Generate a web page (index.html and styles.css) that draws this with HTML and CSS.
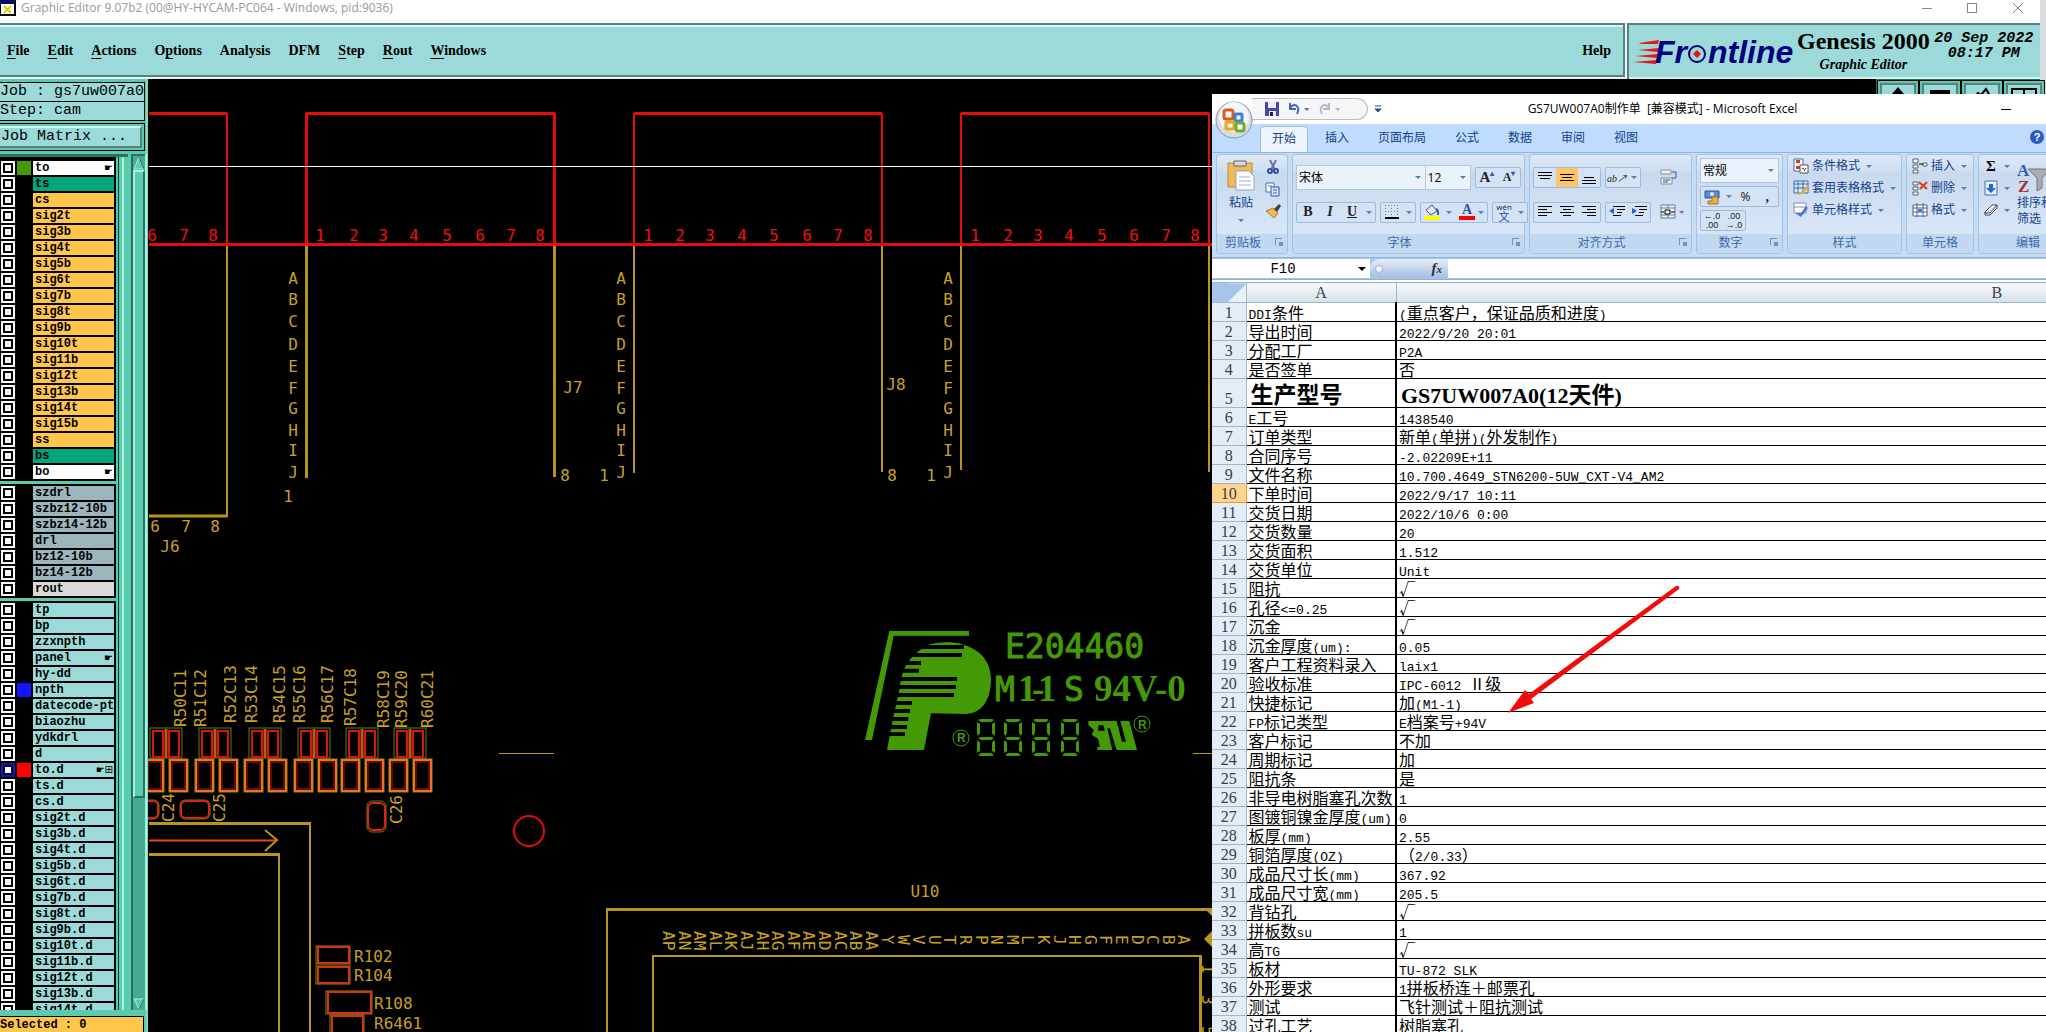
FILE: index.html
```html
<!DOCTYPE html>
<html lang="zh-CN">
<head>
<meta charset="utf-8">
<title>Graphic Editor 9.07b2</title>
<link rel="stylesheet" href="styles.css">
</head>
<body>
<main class="editor">
  <header class="titlebar">
    <svg class="app-icon" width="16" height="16" viewBox="0 0 16 16"><rect width="15" height="15" x="0" y="0" fill="#fff" stroke="#000" stroke-width="2"/><rect width="15" height="4" fill="#0b1060"/><path d="M4 6l7 7M11 6l-7 7" stroke="#d8d000" stroke-width="2"/></svg>
    <h1>Graphic Editor 9.07b2 (00@HY-HYCAM-PC064 - Windows, pid:9036)</h1>
    <svg class="win-buttons" width="104" height="14" viewBox="0 0 104 14" fill="none" stroke="#888"><path d="M0 7.500h10M91 2l10 10M101 2l-10 10"/><rect x="45.500" y="2.500" width="9" height="9"/></svg>
  </header>
  <div class="topbar">
    <nav class="menu">
      <a href="#"><u>F</u>ile</a><a href="#"><u>E</u>dit</a><a href="#"><u>A</u>ctions</a><a href="#">O<u>p</u>tions</a><a href="#">Analysis</a><a href="#">DFM</a><a href="#"><u>S</u>tep</a><a href="#"><u>R</u>out</a><a href="#"><u>W</u>indows</a><a href="#" class="help">Help</a>
    </nav>
    <div class="brand">
      <svg class="logo" width="164" height="40" viewBox="0 0 164 40"><g fill="#e81818"><path d="M6 8l20-3-1 4H8zM5 15l21-2-1 4zM2 21l23-2-1 4zM0 27l24-2-1 4z"/></g><g fill="#00007e" font-family="Liberation Sans, sans-serif" font-weight="bold" font-style="italic" font-size="32"><text x="22" y="28">Fr</text><text x="75" y="28">ntline</text></g><circle cx="64" cy="19" r="8" fill="#9bdad9" stroke="#00007e" stroke-width="2"/><path d="M64 15l4 4-4 4-4-4z" fill="#e81010"/></svg>
      <div class="product"><strong>Genesis 2000</strong><em>Graphic Editor</em></div>
      <div class="clock">20 Sep 2022<br>08:17 PM</div>
    </div>
  </div>
  <div class="workspace">
    <aside class="sidebar">
      <div class="info"><div>Job : gs7uw007a0</div><div>Step: cam</div></div>
      <div class="matrix-wrap"><button class="matrix">Job Matrix ...</button></div>
      <div class="layers-area">
        <div class="layers">
          <div class="group signal">
            <label class="white"><input type="checkbox"><i class="green"></i><span>to</span><b>☛</b></label>
            <label class="mask"><input type="checkbox"><i></i><span>ts</span></label>
            <label><input type="checkbox"><i></i><span>cs</span></label>
            <label><input type="checkbox"><i></i><span>sig2t</span></label>
            <label><input type="checkbox"><i></i><span>sig3b</span></label>
            <label><input type="checkbox"><i></i><span>sig4t</span></label>
            <label><input type="checkbox"><i></i><span>sig5b</span></label>
            <label><input type="checkbox"><i></i><span>sig6t</span></label>
            <label><input type="checkbox"><i></i><span>sig7b</span></label>
            <label><input type="checkbox"><i></i><span>sig8t</span></label>
            <label><input type="checkbox"><i></i><span>sig9b</span></label>
            <label><input type="checkbox"><i></i><span>sig10t</span></label>
            <label><input type="checkbox"><i></i><span>sig11b</span></label>
            <label><input type="checkbox"><i></i><span>sig12t</span></label>
            <label><input type="checkbox"><i></i><span>sig13b</span></label>
            <label><input type="checkbox"><i></i><span>sig14t</span></label>
            <label><input type="checkbox"><i></i><span>sig15b</span></label>
            <label><input type="checkbox"><i></i><span>ss</span></label>
            <label class="mask"><input type="checkbox"><i></i><span>bs</span></label>
            <label class="white"><input type="checkbox"><i></i><span>bo</span><b>☛</b></label>
          </div>
          <div class="group drill">
            <label><input type="checkbox"><i></i><span>szdrl</span></label>
            <label><input type="checkbox"><i></i><span>szbz12-10b</span></label>
            <label><input type="checkbox"><i></i><span>szbz14-12b</span></label>
            <label><input type="checkbox"><i></i><span>drl</span></label>
            <label><input type="checkbox"><i></i><span>bz12-10b</span></label>
            <label><input type="checkbox"><i></i><span>bz14-12b</span></label>
            <label class="rout"><input type="checkbox"><i></i><span>rout</span></label>
          </div>
          <div class="group misc">
            <label><input type="checkbox"><i></i><span>tp</span></label>
            <label><input type="checkbox"><i></i><span>bp</span></label>
            <label><input type="checkbox"><i></i><span>zzxnpth</span></label>
            <label><input type="checkbox"><i></i><span>panel</span><b>☛</b></label>
            <label><input type="checkbox"><i></i><span>hy-dd</span></label>
            <label><input type="checkbox"><i class="blue"></i><span>npth</span></label>
            <label><input type="checkbox"><i></i><span>datecode-pto</span></label>
            <label><input type="checkbox"><i></i><span>biaozhu</span></label>
            <label><input type="checkbox"><i></i><span>ydkdrl</span></label>
            <label><input type="checkbox"><i></i><span>d</span></label>
            <label><input type="checkbox" checked><i class="red"></i><span>to.d</span><b>☛⊞</b></label>
            <label><input type="checkbox"><i></i><span>ts.d</span></label>
            <label><input type="checkbox"><i></i><span>cs.d</span></label>
            <label><input type="checkbox"><i></i><span>sig2t.d</span></label>
            <label><input type="checkbox"><i></i><span>sig3b.d</span></label>
            <label><input type="checkbox"><i></i><span>sig4t.d</span></label>
            <label><input type="checkbox"><i></i><span>sig5b.d</span></label>
            <label><input type="checkbox"><i></i><span>sig6t.d</span></label>
            <label><input type="checkbox"><i></i><span>sig7b.d</span></label>
            <label><input type="checkbox"><i></i><span>sig8t.d</span></label>
            <label><input type="checkbox"><i></i><span>sig9b.d</span></label>
            <label><input type="checkbox"><i></i><span>sig10t.d</span></label>
            <label><input type="checkbox"><i></i><span>sig11b.d</span></label>
            <label><input type="checkbox"><i></i><span>sig12t.d</span></label>
            <label><input type="checkbox"><i></i><span>sig13b.d</span></label>
            <label><input type="checkbox"><i></i><span>sig14t.d</span></label>
          </div>
        </div>
        <div class="scrollbar">
          <svg width="12" height="14" viewBox="0 0 12 14"><path d="M6 1L1 13h10z" fill="#5bcbb0" stroke="#a5f3dc"/><path d="M6 1l5 12" stroke="#1d6656"/></svg>
          <div class="thumb"></div><div class="track"></div>
          <svg width="12" height="12" viewBox="0 0 12 12"><path d="M1 1h10L6 11z" fill="#5bcbb0" stroke="#a5f3dc"/><path d="M11 1L6 11" stroke="#1d6656"/></svg>
        </div>
      </div>
      <div class="selected">Selected : 0</div>
    </aside>
    <svg class="board">
      <defs>
        <g id="pads" fill="none"><rect x="0" y="0" width="32" height="30" stroke="#4b8a10"/><path d="M16 1v29" stroke="#b26018" stroke-width="3"/><rect x="3" y="3" width="10" height="26" stroke="#e01010" stroke-width="2"/><rect x="19" y="3" width="10" height="26" stroke="#e01010" stroke-width="2"/></g>
        <g id="pad" fill="none"><rect x="0" y="0" width="19" height="33" stroke="#7a9010" stroke-width="1"/><rect x="1" y="1" width="17" height="31" stroke="#e8761c" stroke-width="2"/><rect x="3" y="3" width="13" height="27" stroke="#c81808"/></g>
        <g id="seg"><path d="M3 0h12l2 1-3 2H4L1 1zM4 18h10l3 1-3 2H4l-3-2zM4 34h10l3 2-2 1H3l-2-1zM0 3l3 2v9l-2 3-1-2zM15 5l3-2v12l-1 2-2-3zM1 21l2 3v8l-3 2V23zM17 21l1 2v11l-3-2v-8z"/></g>
      </defs>
      <g transform="translate(-148 -79)">
        <g fill="none" stroke="#b8951c">
          <path d="M149 516H227" stroke-width="3"/><path d="M227 245V517M634 245V473M882 245V472M961 245V470M1209 245V472M607 909V1032M653 1032V956H1200M279 855V1032M310 824V1032" stroke-width="2"/>
          <path d="M306.500 245V478M554.500 245V477M149 823.500H311M149 854.500H280M606 909.500H1212M1200.500 955V1032" stroke-width="3"/>
          <path d="M265 830L277 840 265 851" stroke-width="2"/><path d="M499 753.500h55M1193 753.500h19"/>
        </g>
        <g fill="none" stroke="#e60c0c">
          <path d="M149 113.500H227M306 113.500H555M634 113.500H882M961 113.500H1209" stroke-width="3"/><path d="M149 244.500H1212" stroke-width="3"/>
          <path d="M227 113V245M634 113V245M882 113V245M961 113V245M1209 113V245" stroke-width="2"/><path d="M306.500 113V245M554.500 113V245" stroke-width="3"/>
          <path d="M149 840.500H276" stroke-width="2" stroke="#e84a10"/><circle cx="529" cy="831" r="15" stroke-width="2"/>
        </g>
        <path d="M149 166.500H1212" stroke="#fff"/>
        <g class="cad red-text"><text x="152 184 213" y="241">678</text><text x="320 354 383 414 447 480 511 540" y="241">12345678</text><text x="648 680 710 742 774 807 838 868" y="241">12345678</text><text x="975 1008 1038 1069 1102 1134 1166 1195" y="241">12345678</text></g>
        <g class="cad">
          <text x="293 293 293 293 293 293 293 293 293 293" y="284 305 327 350 372 394 414 436 456 478">ABCDEFGHIJ</text>
          <text x="621 621 621 621 621 621 621 621 621 621" y="284 305 327 350 372 394 414 436 456 478">ABCDEFGHIJ</text>
          <text x="948 948 948 948 948 948 948 948 948 948" y="284 305 327 350 372 394 414 436 456 478">ABCDEFGHIJ</text>
          <text x="288" y="502">1</text><text x="604" y="481">1</text><text x="931" y="481">1</text><text x="565" y="481">8</text><text x="892" y="481">8</text>
          <text x="573" y="393">J7</text><text x="896" y="390">J8</text><text x="155 186 215" y="532">678</text><text x="170" y="552">J6</text><text x="925" y="897">U10</text>
        </g>
        <g class="cad start">
          <text transform="translate(186 727) rotate(-90)">R50C11</text><text transform="translate(206 727) rotate(-90)">R51C12</text><text transform="translate(236 723) rotate(-90)">R52C13</text><text transform="translate(257 723) rotate(-90)">R53C14</text><text transform="translate(285 723) rotate(-90)">R54C15</text><text transform="translate(305 723) rotate(-90)">R55C16</text><text transform="translate(333 723) rotate(-90)">R56C17</text><text transform="translate(356 726) rotate(-90)">R57C18</text><text transform="translate(389 728) rotate(-90)">R58C19</text><text transform="translate(407 728) rotate(-90)">R59C20</text><text transform="translate(433 728) rotate(-90)">R60C21</text>
          <text transform="translate(174 822) rotate(-90)">C24</text><text transform="translate(225 822) rotate(-90)">C25</text><text transform="translate(402 824) rotate(-90)">C26</text>
          <text x="354" y="962">R102</text><text x="354" y="981">R104</text><text x="374" y="1009">R108</text><text x="374" y="1029">R6461</text>
        </g>
        <use href="#pads" x="150" y="728"/><use href="#pads" x="199" y="728"/><use href="#pads" x="249" y="728"/><use href="#pads" x="298" y="728"/><use href="#pads" x="346" y="728"/><use href="#pads" x="394" y="728"/>
        <use href="#pad" x="145" y="759"/><use href="#pad" x="169" y="759"/><use href="#pad" x="195" y="759"/><use href="#pad" x="219" y="759"/><use href="#pad" x="244" y="759"/><use href="#pad" x="268" y="759"/><use href="#pad" x="294" y="759"/><use href="#pad" x="318" y="759"/><use href="#pad" x="341" y="759"/><use href="#pad" x="365" y="759"/><use href="#pad" x="389" y="759"/><use href="#pad" x="413" y="759"/>
        <g fill="none" stroke="#4b8a10"><rect x="180" y="800" width="30" height="19" rx="5"/><rect x="367" y="801" width="19" height="31" rx="5"/><rect x="130" y="800" width="29" height="19" rx="5"/></g>
        <g fill="none" stroke="#e02010" stroke-width="2"><rect x="181" y="801" width="28" height="17" rx="5"/><rect x="368" y="803" width="17" height="27" rx="5"/><rect x="130" y="801" width="28" height="17" rx="5"/></g>
        <g fill="none" stroke="#7a9010"><rect x="316" y="946" width="34" height="18"/><rect x="316" y="966" width="34" height="18"/><rect x="326" y="991" width="46" height="23"/><rect x="330" y="1015" width="34" height="24"/></g>
        <g fill="none" stroke="#d83010" stroke-width="2"><rect x="318" y="947" width="31" height="16"/><rect x="318" y="967" width="31" height="16"/><rect x="328" y="992" width="43" height="21"/><rect x="332" y="1016" width="31" height="24"/></g>
        <g class="cad start" id="pins"></g>
        <path d="M1205 909l7 7v-7zM1204 939l8-8v16z" fill="#b8951c"/>
        <g fill="#449a05">
          <g transform="translate(840 600) scale(.3333)"><path d="M148 93H387V107H161L96 420H75z"/><path d="M270 133C300 124 350 124 372 135 425 150 453 190 453 237 453 300 425 342 375 342L273 340 252 450H141L160 350 178 270C186 205 205 165 270 133z"/><g fill="#000"><path d="M220 135H372V147H220zM200 159H366V171H200zM180 183H243V195H180zM180 206H237V218H180zM170 231H351V243H170zM170 255H348V267H170zM160 279H342V291H160zM150 303H216V315H150zM150 327H210V339H150zM145 351H205V363H145zM140 375H201V387H140zM140 397H195V408H140z"/></g>
          <path d="M745 363H830L846 425H858L841 363H868L891 450H830L810 385H802L817 450H772V440H780L774 416 755 404 762 390 745 375zM775 376V392H795L790 376z" fill-rule="evenodd"/></g>
          <use href="#seg" x="977" y="719"/><use href="#seg" x="1004" y="719"/><use href="#seg" x="1032" y="719"/><use href="#seg" x="1061" y="719"/>
          <text x="1005" y="658" class="mark mono">E204460</text>
          <text x="995" y="701" class="mark narrow">M</text><text x="1018 1032 1038" y="701" class="mark serif">1-1</text><text x="1064" y="701" class="mark mono">S</text><text x="1094" y="701" class="mark serif">94V-0</text>
          <text x="957" y="742" class="reg">R</text><text x="1138" y="729" class="reg">R</text>
          <g fill="none" stroke="#449a05"><circle cx="961" cy="738" r="8"/><circle cx="1142" cy="724" r="8"/></g>
        </g>
      </g>
    </svg>
    <div class="tools">
      <button aria-label="Up"><svg width="28" height="12"><path d="M14 0l6 7h-3v5h-6V7H8z"/></svg></button><button aria-label="Out"><svg width="28" height="12"><path d="M4 3h20v5H4z"/></svg></button><button aria-label="Zoom"><svg width="28" height="12"><path d="M6 11l4-5 3 2 5-6 3 5v5" fill="none" stroke="#000" stroke-width="2"/></svg></button><button aria-label="Window"><svg width="28" height="12"><path d="M2 12V2h24v10M14 2v10" fill="none" stroke="#000" stroke-width="2"/></svg></button>
    </div>
  </div>
</main>

<section class="excel">
  <header class="xl-title">
    <div class="quick">
      <button aria-label="Save"><svg width="14" height="14"><path d="M0 0h14v14H0z" fill="#4747a8"/><path d="M3 0h8v6H3zM4 9h7v5H4z" fill="#e8ecf8"/><path d="M5 10h3v4H5z" fill="#20204a"/></svg></button>
      <button aria-label="Undo"><svg width="22" height="14"><path d="M3 1v6h6M3 6c4-6 11-2 7 6" fill="none" stroke="#3d68c0" stroke-width="2"/><path d="M17 6h5l-2 3z" fill="#4470b0"/></svg></button>
      <button aria-label="Redo"><svg width="24" height="14"><path d="M12 1v6H6M12 6C8 0 1 4 5 12" fill="none" stroke="#b4bac4" stroke-width="2"/><path d="M18 6h5l-2 3z" fill="#b0b4bc"/></svg></button>
    </div>
    <svg class="more" width="8" height="8"><path d="M1 1h6M1 4h6l-3 3z" stroke="#2b4f86" fill="#2b4f86"/></svg>
    <h2>GS7UW007A0制作单&nbsp; [兼容模式] - Microsoft Excel</h2>
    <svg class="xl-win" width="49" height="12"><path d="M0 6.500h10M45.500 12V1.500H60" stroke="#000" fill="none"/><path d="M45 11.500h9" stroke="#000"/></svg>
  </header>
  <button class="orb" aria-label="Office"><svg width="38" height="38" viewBox="0 0 38 38"><circle cx="19" cy="19" r="18" fill="#d5dce6" stroke="#8793a5"/><circle cx="19" cy="16" r="15" fill="#f3f6fa"/><g fill="none" stroke-width="3"><rect x="9" y="9" width="9" height="9" rx="2" stroke="#e05a1c"/><rect x="20" y="13" width="7" height="7" rx="1" stroke="#3d80cf"/><rect x="11" y="21" width="8" height="7" rx="1" stroke="#e8a818"/><rect x="21" y="22" width="8" height="8" rx="2" stroke="#6eab30"/></g></svg></button>
  <nav class="tabs"><button class="active">开始</button><button>插入</button><button>页面布局</button><button>公式</button><button>数据</button><button>审阅</button><button>视图</button><span class="question">?</span></nav>
  <div class="ribbon">
    <section class="g-clip"><div class="body">
      <button class="paste"><svg width="28" height="32"><path d="M1 4h24v24H1z" fill="#f0b95a" stroke="#c08a30"/><path d="M7 2h12v5H7z" fill="#d8d8d8" stroke="#666"/><path d="M9 12h13l5 5v14H9z" fill="#fff" stroke="#8fa5c8"/><path d="M12 18h11M12 22h12M12 26h12" stroke="#9ab0d0"/></svg>粘贴<span class="caret"></span></button>
      <div class="small-tools"><button aria-label="Cut"><svg width="16" height="16"><path d="M5 1l5 10M11 1L6 11" stroke="#65779b" stroke-width="2"/><circle cx="5" cy="12" r="2" fill="none" stroke="#2c50a8" stroke-width="2"/><circle cx="11" cy="12" r="2" fill="none" stroke="#2c50a8" stroke-width="2"/></svg></button><button aria-label="Copy"><svg width="16" height="16"><path d="M1 2h8v9H1z" fill="#fff" stroke="#4668b8"/><path d="M6 6h8v9H6z" fill="#d7e4ff" stroke="#3457a8"/><path d="M8 9h4M8 12h4M3 5h4" stroke="#4668b8"/></svg></button><button aria-label="Format"><svg width="16" height="16"><path d="M1 8l7-3 5 5-4 5z" fill="#e8c050" stroke="#a87820"/><path d="M9 6l5-5 2 2-4 6z" fill="#444"/></svg></button></div>
    </div><h3 class="more-options">剪贴板<i></i></h3></section>
    <section class="g-font"><div class="body rows">
      <div class="line"><span class="pick name"><select aria-label="字体"><option>宋体</option></select></span><span class="pick size"><select aria-label="字号"><option>12</option></select></span><span class="btns gap"><button class="big-a">A<sup>▴</sup></button><button class="little-a">A<sup>▾</sup></button></span></div>
      <div class="line"><span class="btns"><button class="serif-b">B</button><button class="serif-i">I</button><button class="serif-u">U</button><span class="caret"></span></span><span class="btns"><button aria-label="Border"><svg width="14" height="14"><path d="M0 .5h13M0 6.500h13M.5 0v13M6.500 0v13M12.500 0v13" stroke="#777" stroke-dasharray="1 2"/><path d="M0 13h14" stroke="#000" stroke-width="2"/></svg></button><span class="caret"></span></span><span class="btns"><button aria-label="Fill"><svg width="16" height="16"><path d="M2 6l6-5 5 6-6 4z" fill="#dfeaff" stroke="#556"/><path d="M12 5c3 1 2 5 2 6" stroke="#3060c0" stroke-width="2" fill="none"/><path d="M0 12h16v4H0z" fill="#ff0"/></svg></button><span class="caret"></span><button class="color-a">A</button><span class="caret"></span></span><span class="btns"><button class="wen"><small>wén</small>文</button><span class="caret"></span></span></div>
    </div><h3 class="more-options">字体<i></i></h3></section>
    <section class="g-align"><div class="body rows">
      <div class="line"><span class="btns"><button aria-label="Top"><svg width="14" height="14"><path d="M0 2.500h14M0 5.500h14M2 8.500h10" stroke="#000"/></svg></button><button class="on" aria-label="Middle"><svg width="14" height="14"><path d="M0 4.500h14M2 7.500h10M0 10.500h14" stroke="#000"/></svg></button><button aria-label="Bottom"><svg width="14" height="14"><path d="M2 7.500h10M0 10.500h14M0 13.500h14" stroke="#000"/></svg></button></span><span class="btns"><button class="rot">ab↗</button><span class="caret"></span></span><button class="plain" aria-label="Wrap"><svg width="18" height="16"><path d="M1 1h10v4H1zM1 9h11v6H1z" fill="#f5f0e0" stroke="#8090a8"/><path d="M12 3h4v6h-4M3 11h7M3 13h5" stroke="#3b5890" fill="none"/></svg></button></div>
      <div class="line"><span class="btns"><button aria-label="Left"><svg width="14" height="14"><path d="M0 1.500h14M0 4.500h9M0 7.500h14M0 10.500h9" stroke="#000"/></svg></button><button aria-label="Center"><svg width="14" height="14"><path d="M0 1.500h14M3 4.500h8M0 7.500h14M3 10.500h8" stroke="#000"/></svg></button><button aria-label="Right"><svg width="14" height="14"><path d="M0 1.500h14M5 4.500h9M0 7.500h14M5 10.500h9" stroke="#000"/></svg></button></span><span class="btns"><button aria-label="Outdent"><svg width="16" height="14"><path d="M4 1.500h12M8 4.500h8M8 7.500h5M4 10.500h8" stroke="#000"/><path d="M0 6l5-3v6z" fill="#2c60c8"/></svg></button><button aria-label="Indent"><svg width="16" height="14"><path d="M4 1.500h12M8 4.500h8M8 7.500h5M4 10.500h8" stroke="#000"/><path d="M6 6L1 3v6z" fill="#2c60c8"/></svg></button></span><button class="plain" aria-label="Merge"><svg width="24" height="16"><path d="M1 1h14v13H1zM1 4h14M1 11h14M8 1v3M8 11v3" fill="#eef3fa" stroke="#667a98"/><path d="M5 6h5v4H5zM1 8h3M11 8h4" stroke="#000" fill="none"/><path d="M19 7h5l-2 3z" fill="#5a7cae"/></svg></button></div>
    </div><h3 class="more-options">对齐方式<i></i></h3></section>
    <section class="g-num"><div class="body">
      <span class="pick format"><select aria-label="数字格式"><option>常规</option></select></span>
      <div class="btns"><button aria-label="Currency"><svg width="16" height="16"><path d="M1 2h14v7H1z" fill="#5f8bd0" stroke="#2f559a"/><circle cx="8" cy="5" r="2" fill="#dfeaff"/><path d="M8 8h6v7H4v-3h4z" fill="#e5b53c" stroke="#a0741a"/></svg></button><span class="caret"></span><button>%</button><button class="serif-b">,</button></div>
      <div class="btns"><button class="dec"><span>←.0</span><span>.00</span></button><button class="dec"><span>.00</span><span>→.0</span></button></div>
    </div><h3 class="more-options">数字<i></i></h3></section>
    <section class="g-style"><div class="body list">
      <button><svg width="16" height="16"><path d="M1 1h9v12H1z" fill="#fff" stroke="#466aa8"/><path d="M3 2h4v3H3zM3 8h4v3H3z" fill="#d83a2c"/><path d="M7 7h8v8H7z" fill="#fff" stroke="#555"/><path d="M9 10l2 1M11 13l2-3" stroke="#333"/></svg>条件格式<span class="caret"></span></button>
      <button><svg width="16" height="16"><path d="M1 1h14v12H1zM1 4h14M1 8h14M5 1v12M10 1v12" fill="#dce9fb" stroke="#3b68ba"/><path d="M4 15l4-3 6-7 2 2-6 7z" fill="#e0b040"/></svg>套用表格格式<span class="caret"></span></button>
      <button><svg width="16" height="16"><path d="M1 1h12v10H1zM1 5h12" fill="#fff" stroke="#8090b0"/><path d="M2 11l6 4 7-9-2-2-5 7z" fill="#4a78cc"/></svg>单元格样式<span class="caret"></span></button>
    </div><h3>样式</h3></section>
    <section class="g-cell"><div class="body list">
      <button><svg width="16" height="16"><path d="M1 1h5v4H1zM1 7h5v3H1zM1 12h5v3H1zM11 5h4v3h-4z" fill="#fff" stroke="#50607c"/><path d="M7 6h4" stroke="#000"/></svg>插入<span class="caret"></span></button>
      <button><svg width="16" height="16"><path d="M1 2h5v3H1zM1 7h5v3H1zM1 12h5v3H1z" fill="#fff" stroke="#50607c"/><path d="M7 2l8 7M15 2L8 9" stroke="#e03a1c" stroke-width="2"/></svg>删除<span class="caret"></span></button>
      <button><svg width="16" height="16"><path d="M1 3h14v11H1zM1 6h14M1 10h14M5 1v14M11 1v14" fill="#fff" stroke="#50607c"/><path d="M6 7h4v3H6z" fill="#4a78cc"/></svg>格式<span class="caret"></span></button>
    </div><h3>单元格</h3></section>
    <section class="g-edit"><div class="body">
      <div class="list"><button><b class="sigma">Σ</b><span class="caret"></span></button><button aria-label="Fill down"><svg width="14" height="16"><path d="M1 1h12v14H1z" fill="#e5eefb" stroke="#4570b8"/><path d="M5 4h4v4h3l-5 5-5-5h3z" fill="#2b66cc"/></svg><span class="caret"></span></button><button aria-label="Clear"><svg width="14" height="16"><path d="M1 10l7-7h5l-7 8H1zM1 10v3h5l7-7V3" fill="#fff" stroke="#445"/></svg><span class="caret"></span></button></div>
      <button class="sort"><svg width="34" height="32"><path d="M11 6h22l-8 9v10l-5 3V15z" fill="#a8adb5" stroke="#777"/><text x="0" y="13" fill="#2f5fb2" class="az">A</text><text x="1" y="29" fill="#a43232" class="az">Z</text></svg>排序和<br>筛选</button>
    </div><h3>编辑</h3></section>
  </div>
  <div class="formula"><input class="cellref" aria-label="名称框" value="F10"><span class="drop"></span><div class="fx"><i></i><em>f<small>x</small></em></div><input class="expr" aria-label="编辑栏"></div>
  <div class="sheet">
    <table>
      <colgroup><col class="c-n"><col class="c-a"><col class="c-b"></colgroup>
      <thead><tr><th class="corner"></th><th>A</th><th>B</th></tr></thead>
      <tbody>
        <tr><th>1</th><td><s>DDI</s>条件</td><td><s>(</s>重点客户，保证品质和进度<s>)</s></td></tr>
        <tr><th>2</th><td>导出时间</td><td><s>2022/9/20 20:01</s></td></tr>
        <tr><th>3</th><td>分配工厂</td><td><s>P2A</s></td></tr>
        <tr><th>4</th><td>是否签单</td><td>否</td></tr>
        <tr class="model"><th>5</th><td>生产型号</td><td><s>GS7UW007A0(12</s>天件<s>)</s></td></tr>
        <tr><th>6</th><td><s>E</s>工号</td><td><s>1438540</s></td></tr>
        <tr><th>7</th><td>订单类型</td><td>新单<s>(</s>单拼<s>)(</s>外发制作<s>)</s></td></tr>
        <tr><th>8</th><td>合同序号</td><td><s>-2.02209E+11</s></td></tr>
        <tr><th>9</th><td>文件名称</td><td><s>10.700.4649_STN6200-5UW_CXT-V4_AM2</s></td></tr>
        <tr><th class="current">10</th><td>下单时间</td><td><s>2022/9/17 10:11</s></td></tr>
        <tr><th>11</th><td>交货日期</td><td><s>2022/10/6 0:00</s></td></tr>
        <tr><th>12</th><td>交货数量</td><td><s>20</s></td></tr>
        <tr><th>13</th><td>交货面积</td><td><s>1.512</s></td></tr>
        <tr><th>14</th><td>交货单位</td><td><s>Unit</s></td></tr>
        <tr><th>15</th><td>阻抗</td><td>√</td></tr>
        <tr><th>16</th><td>孔径<s>&lt;=0.25</s></td><td>√</td></tr>
        <tr><th>17</th><td>沉金</td><td>√</td></tr>
        <tr><th>18</th><td>沉金厚度<s>(um):</s></td><td><s>0.05</s></td></tr>
        <tr><th>19</th><td>客户工程资料录入</td><td><s>laix1</s></td></tr>
        <tr><th>20</th><td>验收标准</td><td><s>IPC-6012 </s>Ⅱ级</td></tr>
        <tr><th>21</th><td>快捷标记</td><td>加<s>(M1-1)</s></td></tr>
        <tr><th>22</th><td><s>FP</s>标记类型</td><td><s>E</s>档案号<s>+94V</s></td></tr>
        <tr><th>23</th><td>客户标记</td><td>不加</td></tr>
        <tr><th>24</th><td>周期标记</td><td>加</td></tr>
        <tr><th>25</th><td>阻抗条</td><td>是</td></tr>
        <tr><th>26</th><td>非导电树脂塞孔次数</td><td><s>1</s></td></tr>
        <tr><th>27</th><td>图镀铜镍金厚度<s>(um)</s></td><td><s>0</s></td></tr>
        <tr><th>28</th><td>板厚<s>(mm)</s></td><td><s>2.55</s></td></tr>
        <tr><th>29</th><td>铜箔厚度<s>(OZ)</s></td><td>（<s>2/0.33</s>）</td></tr>
        <tr><th>30</th><td>成品尺寸长<s>(mm)</s></td><td><s>367.92</s></td></tr>
        <tr><th>31</th><td>成品尺寸宽<s>(mm)</s></td><td><s>205.5</s></td></tr>
        <tr><th>32</th><td>背钻孔</td><td>√</td></tr>
        <tr><th>33</th><td>拼板数<s>su</s></td><td><s>1</s></td></tr>
        <tr><th>34</th><td>高<s>TG</s></td><td>√</td></tr>
        <tr><th>35</th><td>板材</td><td><s>TU-872 SLK</s></td></tr>
        <tr><th>36</th><td>外形要求</td><td><s>1</s>拼板桥连＋邮票孔</td></tr>
        <tr><th>37</th><td>测试</td><td>飞针测试＋阻抗测试</td></tr>
        <tr><th>38</th><td>过孔工艺</td><td>树脂塞孔</td></tr>
      </tbody>
    </table>
  </div>
  <svg class="arrow" width="180" height="136"><path d="M0 132L17 109 21 113 168 5Q172 4 171 8L23 118 26 122z" fill="#f50a0a"/></svg>
</section>
<script src="pins.js"></script>
</body>
</html>
```
FILE: pins.js
```js
// Pin letters of U10: two-letter columns on the left, single letters on the right.
const pins = document.getElementById('pins');
const put = (label, x, y) => {
  const t = document.createElementNS('http://www.w3.org/2000/svg', 'text');
  t.setAttribute('transform', `translate(${Math.round(x)} ${y}) rotate(90)`);
  t.textContent = label;
  pins.append(t);
};
[...'PNMLKJHGFEDCBA'].forEach((c, i) => put('A' + c, 663 + i * 15.6, 931));
[...'YWVUTRPNMLKJHGFEDCBA'].forEach((c, i) => put(c, 882 + i * 15.6, 935));
['1', '3', '5'].forEach((c, i) => put(c, 1202, 964 + i * 31));
```
FILE: styles.css
```css
* { box-sizing: border-box; }
body { margin: 0; height: 100vh; overflow: hidden; background: #d9dde0; font-family: "Open Sans", "Noto Sans CJK SC", sans-serif; font-size: 12px; }
button { font: inherit; color: inherit; background: none; border: 0; padding: 0; }
h1, h2, h3 { margin: 0; font-weight: normal; }
a { color: inherit; text-decoration: none; }

.editor { height: 100vh; margin-right: 6px; display: flex; flex-direction: column; background: #fff; }
.titlebar { height: 23px; flex: none; display: flex; align-items: center; gap: 5px; padding-bottom: 8px; }
.titlebar h1 { flex: 1; font-size: 12px; line-height: 16px; color: #999; }
.win-buttons { margin-right: 14px; }
.topbar { height: 56px; flex: none; display: flex; gap: 2px; background: #e4f7f6; }
.menu { flex: 1; display: flex; align-items: center; gap: 18px; padding: 2px 12px 0 7px; background: #9bdad9; border: solid #5b8080; border-width: 2px 2px 2px 0; box-shadow: inset 0 2px #d5f3f2; margin-bottom: 2px; font: bold 14px/18px "Liberation Serif", serif; }
.menu u { text-underline-offset: 3px; }
.menu .help { margin-left: auto; }
.brand { width: 413px; display: flex; align-items: flex-start; padding: 4px 4px 0; background: #9bdad9; border: solid #5b8080; border-width: 2px 0 0 2px; box-shadow: inset 0 -2px #d5f3f2; }
.logo { margin-top: 6px; }
.product { display: flex; flex-direction: column; align-items: center; font: bold 24px/24px "Liberation Serif", serif; }
.product em { font-size: 14px; line-height: 24px; }
.clock { flex: 1; font: italic bold 15px/15px "Liberation Mono", monospace; text-align: center; padding: 2px 0 0 2px; }
.workspace { flex: 1; min-height: 0; display: flex; background: #000; }

.sidebar { width: 148px; flex: none; display: flex; flex-direction: column; padding-top: 3px; background: #5bcbb0; border-right: 2px solid #79dcc4; color: #000; font-family: "Liberation Mono", monospace; }
.info, .matrix-wrap { margin-right: 1px; border: 1px solid #000; border-left: 0; background: #9bdad9; font-size: 15px; }
.info div { height: 18px; line-height: 18px; white-space: nowrap; overflow: hidden; }
.info div + div { border-top: 1px solid #000; height: 19px; }
.matrix-wrap { margin-top: 2px; background: #5bcbb0; padding: 2px 2px 2px 0; }
.matrix { display: block; width: 100%; height: 22px; text-align: left; padding-left: 1px; background: #9bdad9; border: solid; border-width: 2px 2px 2px 0; border-color: #d5f3f2 #5b8080 #5b8080; line-height: 18px; }
.layers-area { flex: 1; min-height: 0; display: flex; margin-top: 3px; gap: 3px; padding-right: 2px; }
.layers { flex: none; width: 128px; overflow: hidden; border-top: 3px solid #2d6f60; padding-top: 3px; background: linear-gradient(90deg, #000 116px, #5bcbb0 116px 118px, #143a32 118px 119px, #5bcbb0 119px 122px, #a5f3dc 122px 124px, #5bcbb0 124px); }
.group { width: 116px; background: #000; padding-top: 2px; --c: #9bdad9; }
.group + .group { border-top: 3px solid #5bcbb0; }
.group.signal { --c: #ffc64c; padding-top: 1px; }
.group.drill { --c: #9cb6be; }
.group label { display: flex; gap: 2px; height: 16px; padding: 0 2px 2px 1px; position: relative; font: bold 12px/14px "Liberation Mono", monospace; }
.group .white { --c: #fff; }
.group .mask { --c: #05a57c; }
.group .rout { --c: #d9d9d9; }
.group input { appearance: none; flex: none; width: 14px; height: 14px; margin: 0; background: #fff; border: 2px solid #fff; box-shadow: inset 0 0 0 2px #000; }
.group input:checked { border-color: #101c9c; box-shadow: inset 0 0 0 2px #000050; }
.group i { flex: none; width: 14px; }
.group .green { background: #449a05; }
.group .blue { background: #1414ff; }
.group .red { background: #f00; }
.group span { flex: 1; min-width: 0; overflow: hidden; white-space: nowrap; padding-left: 2px; background: var(--c); }
.group b { position: absolute; right: 3px; top: 0; font: 10px/14px "DejaVu Sans", sans-serif; }
.scrollbar { width: 14px; display: flex; flex-direction: column; background: #47ab92; border: 2px solid #2d6f60; border-width: 2px 0 0 2px; box-shadow: 2px 0 #a5f3dc; }
.thumb { flex: 638; background: #5bcbb0; border: solid; border-width: 2px; border-color: #a5f3dc #2d6f60 #2d6f60 #a5f3dc; }
.track { flex: 205; }
.selected { height: 16px; flex: none; margin: 6px 2px 0 0; border: solid #000; border-width: 1px 1px 0 0; background: #ffc64c; font: bold 12px/16px "Liberation Mono", monospace; }

.board { flex: 1; min-width: 0; height: 100%; overflow: hidden; }
.cad { font: 16px "DejaVu Sans Mono", monospace; fill: #c8a022; text-anchor: middle; }
.cad.start { text-anchor: start; }
.red-text { fill: #f01010; }
.mark.mono { font: 33px "DejaVu Sans Mono", monospace; stroke: #449a05; stroke-width: 1px; }
.mark.narrow { font: 33px "DejaVu Sans Mono", monospace; stroke: #449a05; stroke-width: 1px; }
.mark.serif { font: bold 37px "Liberation Serif", serif; }
.reg { font: bold 12px "Liberation Sans", sans-serif; }
.tools { width: 164px; flex: none; display: flex; align-items: flex-start; gap: 2px; padding: 2px; background: #2d6f60; }
.tools button { flex: 1; height: 36px; padding: 4px; background: #9bdad9; border: 2px solid #5bcbb0; outline: 1px solid #000; display: grid; place-items: start center; box-shadow: inset 0 0 0 2px #5b8080; }

.excel { position: absolute; left: 1212px; right: 0; top: 94px; bottom: 0; display: flex; flex-direction: column; background: #fff; overflow: hidden; color: #15428b; }
.excel > * { flex: none; }
.xl-title { display: flex; height: 30px; align-items: center; padding-left: 40px; color: #000; }
.quick { display: flex; gap: 8px; align-items: center; height: 22px; width: 116px; padding-left: 13px; border: 1px solid #b8bcc4; border-left: 0; border-radius: 0 11px 11px 0; background: #f6f6f8; }
.quick svg { display: block; }
.more { margin-left: 6px; }
.xl-title h2 { flex: 1; text-align: center; font-size: 12px; line-height: 20px; padding-left: 64px; padding-right: 122px; }
.xl-win { margin-right: -4px; }
.orb { position: absolute; left: 3px; top: 7px; width: 38px; height: 38px; }
.tabs { display: flex; height: 28px; padding: 0 2px 0 48px; background: #bfdbff; line-height: 24px; }
.tabs button { padding: 0 14px 0 15px; }
.tabs .active { width: 48px; margin: 2px 2px 0 0; padding: 0 0 2px; background: #edf4fd; border: 1px solid #9dbfec; border-bottom: 0; border-radius: 4px 4px 0 0; }
.question { margin: 6px 0 0 auto; width: 14px; height: 14px; border-radius: 7px; background: #2c5cc0; color: #fff; font: bold 11px/14px "Liberation Sans", sans-serif; text-align: center; }
.ribbon { display: flex; gap: 4px; height: 106px; padding: 1px 0 4px 4px; background: #c5dcf5; border-top: 1px solid #8db2e3; border-bottom: 1px solid #8db2e3; overflow: hidden; }
.ribbon section { flex: none; height: 100px; display: flex; flex-direction: column; border: 1px solid #a5c2e4; border-radius: 3px; background: linear-gradient(#dde8f5, #cfdff2 16px, #c9d9ee 17px, #dcebfb); }
.g-clip { width: 72px; }
.g-font { width: 233px; }
.g-align { width: 163px; }
.g-num { width: 87px; }
.g-style { width: 115px; }
.g-cell { width: 68px; }
.g-edit { width: 100px; }
.ribbon h3 { height: 19px; text-align: center; background: #c1d8f0; color: #3e6aaa; font-size: 12px; line-height: 18px; position: relative; }
.ribbon .more-options { padding-right: 18px; }
.ribbon h3 i { position: absolute; right: 5px; top: 4px; width: 7px; height: 7px; border: solid #6e92c2; border-width: 1px 0 0 1px; }
.ribbon h3 i::after { content: ""; display: block; margin: 3px 0 0 3px; width: 4px; height: 4px; background: #6e92c2; }
.body { flex: 1; display: flex; min-height: 0; }
.body svg { display: block; }
.caret { flex: none; width: 5px; margin: 0 3px; border: solid transparent; border-width: 3px 3px 0; border-top-color: #5a7cae; align-self: center; }
.paste { width: 48px; padding-top: 4px; display: flex; flex-direction: column; align-items: center; gap: 3px; line-height: 18px; }
.paste svg { height: 32px; }
.paste .caret { margin-top: 4px; }
.small-tools { display: flex; flex-direction: column; gap: 6px; padding-top: 4px; }
.rows { flex-direction: column; gap: 13px; padding: 11px 3px 0; }
.line { display: flex; height: 22px; gap: 4px; align-items: center; }
.btns { display: flex; height: 21px; border: 1px solid #9ebbdf; border-radius: 2px; background: #d3e2f4; color: #222; }
.btns.gap { margin-left: auto; }
.btns button { width: 22px; height: 19px; display: grid; place-items: center; }
.btns .on { background: #fdc468; }
.pick { position: relative; display: block; height: 25px; }
.pick::after { content: ""; position: absolute; right: 5px; top: 11px; border: solid transparent; border-width: 3px 3px 0; border-top-color: #5a7cae; }
.pick select { appearance: none; width: 100%; height: 100%; padding: 0 2px; border: 1px solid #b3c7e1; background: #eaf2fb; font: 12px "Open Sans", "Noto Sans CJK SC", sans-serif; color: #000; }
.pick.name { width: 131px; margin-right: -5px; }
.pick.size { width: 47px; }
.pick.format { width: 79px; }
.btns .big-a { font: bold 15px "Liberation Serif", serif; display: block; }
.btns .little-a { font: bold 12px "Liberation Serif", serif; display: block; }
.btns sup { font-size: 8px; color: #3460a8; }
.btns .serif-b, .btns .serif-i, .btns .serif-u { font: bold 14px "Liberation Serif", serif; }
.btns .serif-i { font-style: italic; }
.btns .serif-u { text-decoration: underline; }
.btns .color-a { font: bold 14px/13px "Liberation Serif", serif; color: #2f5590; border-bottom: 4px solid #f00; width: 16px; height: 17px; margin-left: 4px; }
.btns .wen { display: block; font-size: 11px; line-height: 11px; color: #2444c4; }
.wen small { display: block; font-size: 8px; line-height: 8px; color: #222; }
.btns .rot { font: italic 10px "Liberation Serif", serif; }
.plain { margin-left: auto; width: 28px; }
.g-num .body { flex-direction: column; align-items: flex-start; gap: 3px; padding: 3px; }
.g-num .btns:first-of-type { width: 79px; justify-content: space-between; }
.btns .dec { font: 9px/9px "Liberation Sans", sans-serif; display: flex; flex-direction: column; align-items: center; justify-content: center; }
.list { display: flex; flex-direction: column; gap: 4px; padding: 2px 0 0 5px; }
.list button { display: flex; align-items: center; gap: 3px; height: 18px; line-height: 18px; }
.sigma { width: 14px; color: #000; font: bold 15px "Liberation Serif", serif; }
.sort { width: 46px; white-space: nowrap; line-height: 16px; text-align: left; padding-left: 4px; }
.az { font: bold 17px "Liberation Serif", serif; }
.formula { display: flex; height: 22px; margin-bottom: 2px; padding: 1px 0; background: #a9c6ea; border: solid #8fb0da; border-width: 0 0 1px; }
.formula input { border: 0; padding: 0; background: #fff; min-width: 0; }
.cellref { width: 142px; text-align: center; font: 14px "Liberation Mono", monospace; }
.drop { width: 16px; background: #fff; }
.drop::after { content: ""; display: block; margin: 8px 4px; width: 0; border: solid transparent; border-width: 4px 4px 0; border-top-color: #000; }
.fx { width: 78px; display: flex; align-items: center; justify-content: space-between; padding: 0 6px 0 5px; border-radius: 9px 0 0 9px; background: linear-gradient(#e4eefb, #a3bfe2); color: #333; }
.fx i { width: 8px; height: 8px; border-radius: 4px; background: #f2f5fa; border: 1px solid #9aaed0; }
.fx em { font: italic bold 15px "Liberation Serif", serif; }
.fx small { font-size: 11px; }
.expr { flex: 1; }
.excel .sheet { flex: 1; min-height: 0; overflow: hidden; }
.sheet table { table-layout: fixed; width: 1386px; border-collapse: collapse; color: #000; font: 16px/18px "Noto Sans CJK SC", sans-serif; }
.c-n { width: 34px; }
.c-a { width: 150px; }
.sheet tr { height: 19px; }
.sheet thead tr { height: 20px; }
.sheet th { padding: 0; font: 16px/17px "Liberation Serif", serif; color: #333f4f; background: #e4ecf7; border: 1px solid #9eb6ce; border-left: 0; }
.sheet thead th { background: linear-gradient(#f8fafc, #d6dfea); }
.sheet thead .corner { background: linear-gradient(135deg, #a9c4e9 65%, #e8f0fa 66%); }
.sheet .current { background: #ffd58d; border-color: #f29536; }
.sheet td { padding: 0 0 0 2px; border-bottom: 1px solid #000; white-space: nowrap; overflow: hidden; height: 19px; }
.sheet td:nth-child(2) { border-right: 2px solid #000; }
.sheet s { text-decoration: none; font: 13px/1px "Liberation Mono", monospace; white-space: pre; }
.sheet .model { height: 29px; }
.model td { font-size: 23px; line-height: 28px; font-weight: bold; padding-left: 4px; }
.sheet .model s { font: bold 22px/1px "Liberation Serif", serif; }
.model th { vertical-align: bottom; }
.arrow { position: absolute; left: 296px; top: 487px; }
```
